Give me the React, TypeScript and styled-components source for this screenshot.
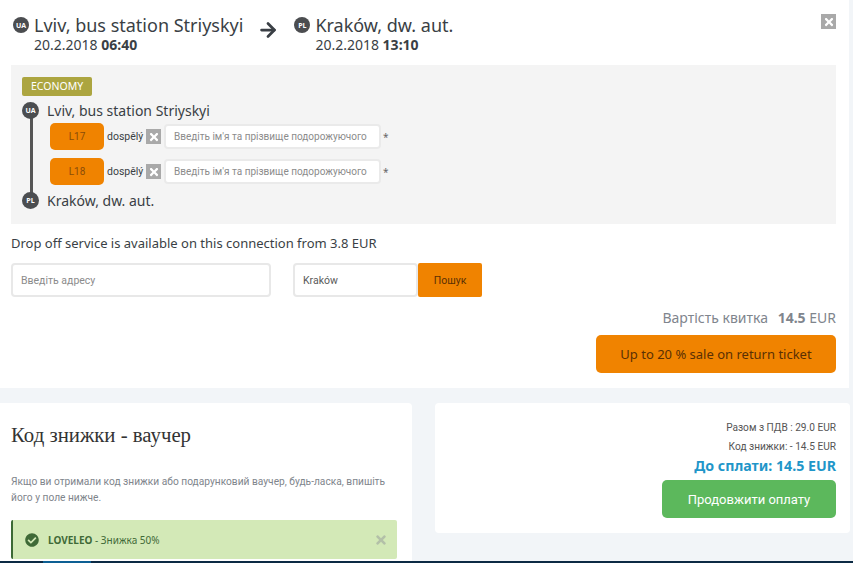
import React from 'react';
import styled, { createGlobalStyle } from 'styled-components';
import { ArrowRight } from 'lucide-react';
import { FaCheckCircle, FaTimes } from 'react-icons/fa';

const GlobalStyle = createGlobalStyle`
  html, body {
    margin: 0;
    padding: 0;
    height: 563px;
    overflow: hidden;
    background: #f2f5f8;
    font-family: "Noto Sans", "Open Sans", sans-serif;
    color: #3a3f45;
  }
  * { box-sizing: border-box; }
`;

const Page = styled.div`
  width: 853px;
  height: 563px;
  display: flex;
  flex-direction: column;
`;

const TopPanel = styled.section`
  position: relative;
  width: 849px;
  height: 388px;
  background: #fff;
  padding: 15px 13px 0 11px;
`;

const Header = styled.header`
  display: flex;
  align-items: flex-start;
  height: 50px;
  padding-left: 2px;
`;

const Stop = styled.div`
  display: flex;
  gap: 5px;
  & > span { margin-top: 2px; }
`;

const Flag = styled.span<{ $size?: number }>`
  flex: none;
  width: ${(p) => p.$size ?? 16}px;
  height: ${(p) => p.$size ?? 16}px;
  border-radius: 50%;
  background: #4b4d50;
  color: #fff;
  font-size: 7px;
  font-weight: 700;
  display: flex;
  align-items: center;
  justify-content: center;
  font-family: "Open Sans", sans-serif;
`;

const StopName = styled.div`
  font-size: 18px;
  line-height: 21px;
  color: #3a3f45;
  white-space: nowrap;
`;

const StopTime = styled.div`
  margin-top: 1px;
  font-size: 14px;
  line-height: 15px;
  color: #3a3f45;
  white-space: nowrap;
  b { font-weight: 700; }
`;

const ArrowBox = styled.span`
  display: flex;
  width: 51px;
  height: 30px;
  align-items: center;
  padding: 0 0 0 14px;
  color: #3a3f45;
`;

const CloseIcon = styled.button`
  position: absolute;
  top: 14px;
  right: 13px;
  width: 15px;
  height: 15px;
  padding: 0;
  border: none;
  background: #a9a9a9;
  color: #fff;
  display: flex;
  align-items: center;
  justify-content: center;
`;

const GreyBox = styled.div`
  height: 159px;
  background: #f4f4f4;
  padding: 12px 11px;
`;

const Badge = styled.span`
  display: block;
  width: fit-content;
  height: 19px;
  padding: 0 9px;
  border-radius: 2px;
  background: #aca540;
  color: #fff;
  font-size: 10.5px;
  line-height: 19px;
`;

const Route = styled.div`
  position: relative;
  margin-top: 5px;
`;

const RouteLine = styled.span`
  position: absolute;
  left: 8px;
  top: 14px;
  width: 3px;
  height: 78px;
  background: #555;
`;

const RouteStop = styled.div`
  position: relative;
  display: flex;
  align-items: center;
  gap: 8px;
  height: 18px;
  font-size: 14px;
  color: #3a3f45;
`;

const Seats = styled.div`
  display: flex;
  flex-direction: column;
  gap: 8px;
  padding: 4px 0 6px 28px;
`;

const SeatRow = styled.div`
  display: flex;
  align-items: center;
  height: 27px;
`;

const SeatTag = styled.span`
  width: 54px;
  height: 27px;
  border-radius: 5px;
  background: #f08300;
  color: #8a4c08;
  font-size: 10px;
  display: flex;
  align-items: center;
  justify-content: center;
  font-family: "Roboto", sans-serif;
`;

const SeatKind = styled.span`
  margin-left: 3px;
  font-size: 10.5px;
  color: #3a3f45;
  width: 39px;
  font-family: "Roboto", sans-serif;
`;

const SeatRemove = styled.span`
  width: 15px;
  height: 15px;
  background: #a9a9a9;
  color: #fff;
  display: flex;
  align-items: center;
  justify-content: center;
`;

const NameInput = styled.input`
  width: 217px;
  height: 25px;
  margin-left: 3px;
  padding: 0 8px;
  border: 2px solid #eaeaea;
  border-radius: 4px;
  background: #fff;
  font-family: "Roboto", sans-serif;
  font-size: 10px;
  outline: none;
  &::placeholder { color: #8b8b8b; opacity: 1; }
`;

const Required = styled.span`
  margin-left: 2px;
  font-size: 10px;
  color: #666;
`;

const DropOff = styled.p`
  margin: 10px 0 10px;
  font-size: 13px;
  line-height: 19px;
  color: #3a3f45;
`;

const DropRow = styled.div`
  display: flex;
  align-items: stretch;
  height: 34px;
`;

const AddressInput = styled.input<{ $width: number }>`
  width: ${(p) => p.$width}px;
  height: 34px;
  padding: 0 8px;
  border: 2px solid #e8e8e8;
  border-radius: 4px;
  background: #fff;
  font-family: "Roboto", sans-serif;
  font-size: 10.5px;
  color: #5a5a5a;
  outline: none;
  &::placeholder { color: #8b8b8b; opacity: 1; }
`;

const SearchButton = styled.button`
  width: 64px;
  border: none;
  border-radius: 2px;
  background: #f08300;
  color: #5a3004;
  font-family: "Roboto", sans-serif;
  font-size: 10.5px;
`;

const Spacer = styled.span`
  width: 22px;
`;

const Price = styled.div`
  margin-top: 11px;
  text-align: right;
  font-size: 14px;
  line-height: 20px;
  color: #7f858d;
  b { font-weight: 700; margin-left: 6px; }
`;

const ReturnRow = styled.div`
  display: flex;
  justify-content: flex-end;
  margin-top: 7px;
`;

const ReturnButton = styled.button`
  width: 240px;
  height: 38px;
  border: none;
  border-radius: 5px;
  background: #f08300;
  color: #5a3004;
  font-family: "Noto Sans", sans-serif;
  font-size: 13px;
`;

const Cards = styled.div`
  display: flex;
  align-items: flex-start;
  height: 158px;
  margin-top: 15px;
`;

const VoucherCard = styled.section`
  width: 412px;
  height: 158px;
  padding: 20px 15px 0 11px;
  background: #fff;
  border-top-right-radius: 4px;
`;

const VoucherTitle = styled.h2`
  margin: 0;
  font-family: "Liberation Serif", serif;
  font-weight: 400;
  font-size: 20.8px;
  line-height: 24px;
  color: #333;
`;

const VoucherText = styled.p`
  margin: 27px 0 0;
  font-family: "Roboto", sans-serif;
  font-size: 10.2px;
  line-height: 16px;
  color: #80858c;
`;

const Alert = styled.div`
  display: flex;
  align-items: center;
  height: 39px;
  margin-top: 14px;
  padding: 0 9px 0 12px;
  border-left: 2px solid #3c6a35;
  border-radius: 2px;
  background: #d3e9b7;
  font-size: 10px;
  color: #3f6a37;
  svg { flex: none; }
  b { font-weight: 700; margin-left: 9px; }
`;

const AlertText = styled.span`
  flex: 1;
`;

const AlertClose = styled.span`
  display: flex;
  color: #b3c0a8;
`;

const TotalCard = styled.section`
  width: 415px;
  height: 130px;
  margin-left: 23px;
  padding: 15px 14px 0 0;
  background: #fff;
  border-radius: 4px;
  display: flex;
  flex-direction: column;
  align-items: flex-end;
`;

const TotalLine = styled.div`
  font-family: "Roboto", sans-serif;
  font-size: 10.15px;
  line-height: 19px;
  color: #555;
`;

const TotalDue = styled.div`
  font-size: 14.2px;
  font-weight: 700;
  line-height: 19px;
  color: #1f96c9;
`;

const PayButton = styled.button`
  width: 174px;
  height: 38px;
  margin-top: 5px;
  border: none;
  border-radius: 5px;
  background: #5cb85c;
  color: #fff;
  font-family: "Roboto", sans-serif;
  font-size: 13px;
`;

const Footer = styled.footer`
  height: 2px;
  background: #0c2a44;
  padding-left: 43px;
`;

const FooterAccent = styled.span`
  display: block;
  width: 48px;
  height: 2px;
  background: #0d5f93;
`;

const passengers = ['L17', 'L18'];

export default function App() {
  return (
    <Page>
      <GlobalStyle />
      <TopPanel>
        <Header>
          <Stop>
            <Flag>UA</Flag>
            <div>
              <StopName>Lviv, bus station Striyskyi</StopName>
              <StopTime>20.2.2018 <b>06:40</b></StopTime>
            </div>
          </Stop>
          <ArrowBox><ArrowRight size={22} strokeWidth={3} /></ArrowBox>
          <Stop>
            <Flag>PL</Flag>
            <div>
              <StopName>Kraków, dw. aut.</StopName>
              <StopTime>20.2.2018 <b>13:10</b></StopTime>
            </div>
          </Stop>
        </Header>
        <CloseIcon aria-label="close"><FaTimes size={12} /></CloseIcon>

        <GreyBox>
          <Badge>ECONOMY</Badge>
          <Route>
            <RouteLine />
            <RouteStop>
              <Flag $size={17}>UA</Flag>
              Lviv, bus station Striyskyi
            </RouteStop>
            <Seats>
              {passengers.map((seat) => (
                <SeatRow key={seat}>
                  <SeatTag>{seat}</SeatTag>
                  <SeatKind>dospělý</SeatKind>
                  <SeatRemove><FaTimes size={12} /></SeatRemove>
                  <NameInput placeholder="Введіть ім'я та прізвище подорожуючого" />
                  <Required>*</Required>
                </SeatRow>
              ))}
            </Seats>
            <RouteStop>
              <Flag $size={17}>PL</Flag>
              Kraków, dw. aut.
            </RouteStop>
          </Route>
        </GreyBox>

        <DropOff>Drop off service is available on this connection from 3.8 EUR</DropOff>
        <DropRow>
          <AddressInput $width={260} placeholder="Введіть адресу" />
          <Spacer />
          <AddressInput $width={125} defaultValue="Kraków" />
          <SearchButton>Пошук</SearchButton>
        </DropRow>

        <Price>Вартість квитка <b>14.5</b> EUR</Price>
        <ReturnRow>
          <ReturnButton>Up to 20 % sale on return ticket</ReturnButton>
        </ReturnRow>
      </TopPanel>

      <Cards>
        <VoucherCard>
          <VoucherTitle>Код знижки - ваучер</VoucherTitle>
          <VoucherText>
            Якщо ви отримали код знижки або подарунковий ваучер, будь-ласка, впишіть його у поле нижче.
          </VoucherText>
          <Alert>
            <FaCheckCircle size={14} />
            <AlertText><b>LOVELEO</b> - Знижка 50%</AlertText>
            <AlertClose><FaTimes size={14} /></AlertClose>
          </Alert>
        </VoucherCard>
        <TotalCard>
          <TotalLine>Разом з ПДВ : 29.0 EUR</TotalLine>
          <TotalLine>Код знижки: - 14.5 EUR</TotalLine>
          <TotalDue>До сплати: 14.5 EUR</TotalDue>
          <PayButton>Продовжити оплату</PayButton>
        </TotalCard>
      </Cards>
      <Footer><FooterAccent /></Footer>
    </Page>
  );
}
